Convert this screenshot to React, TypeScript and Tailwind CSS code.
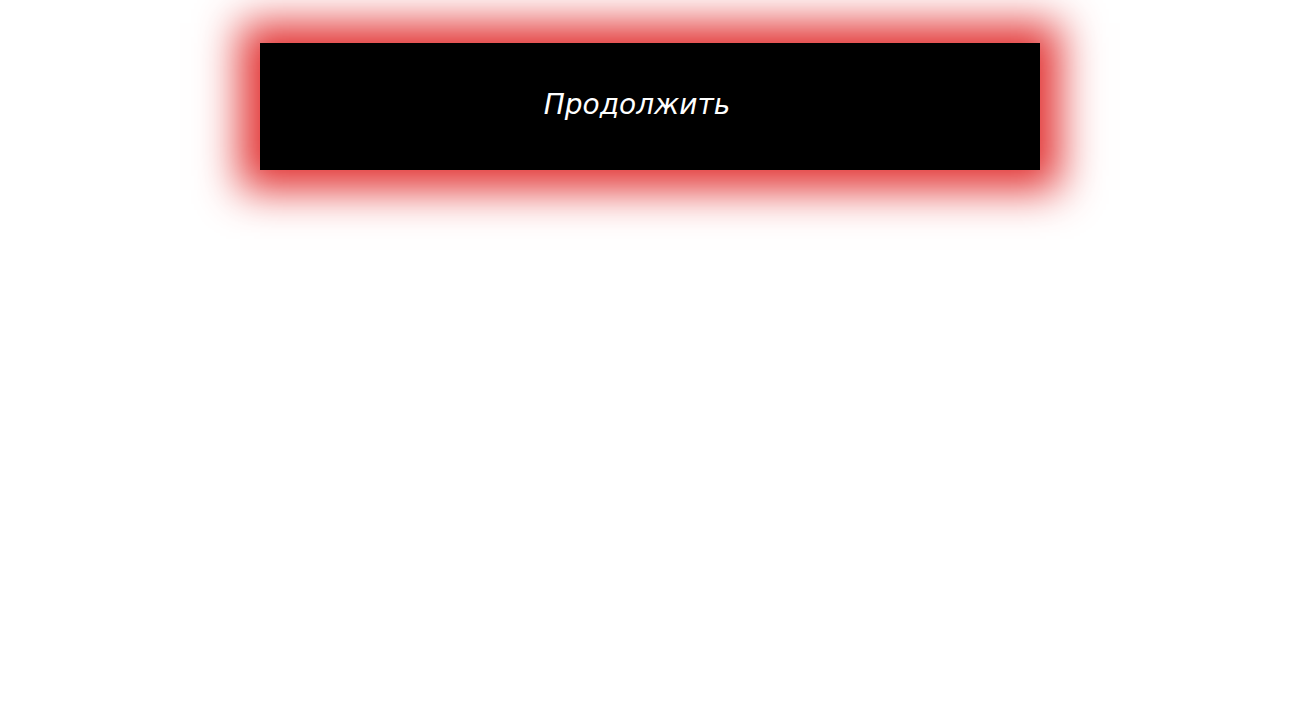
export default function App() {
  return (
    <div className="min-h-screen bg-white flex flex-col items-center pt-[43px]">
      <button
        type="button"
        className="w-[780px] h-[127px] bg-black flex items-center justify-center pr-[26px] pb-[4px] shadow-[0_0_40px_20px_rgba(226,50,50,1)]"
      >
        <span
          className="text-white italic text-[28px]"
          style={{ fontFamily: '"DejaVu Sans", sans-serif' }}
        >
          Продолжить
        </span>
      </button>
    </div>
  );
}
